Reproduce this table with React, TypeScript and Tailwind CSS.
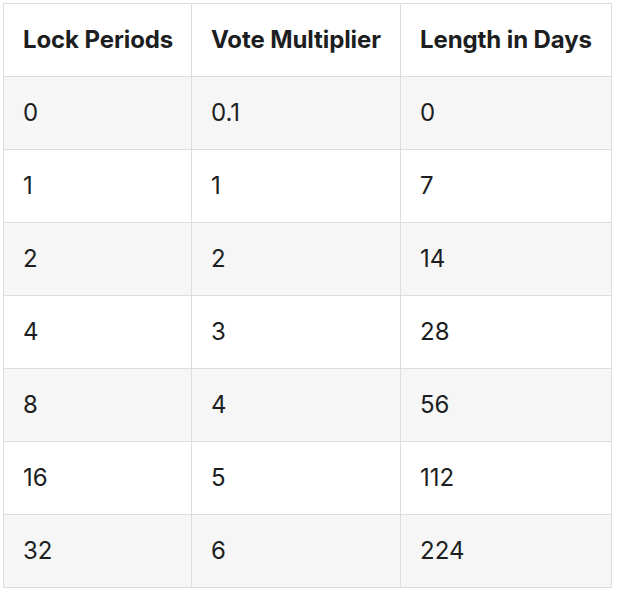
import React from "react";

const rows = [
  ["0", "0.1", "0"],
  ["1", "1", "7"],
  ["2", "2", "14"],
  ["4", "3", "28"],
  ["8", "4", "56"],
  ["16", "5", "112"],
  ["32", "6", "224"],
];

export default function App() {
  return (
    <div className="bg-white w-[618px] h-[594px] pl-[3px] pt-[3px]" style={{ fontFamily: "Inter, 'Noto Sans', sans-serif" }}>
      <table className="border-collapse table-fixed w-[608px] text-[24px] text-[#1c1e21]">
        <colgroup>
          <col className="w-[188px]" />
          <col className="w-[209px]" />
          <col className="w-[211px]" />
        </colgroup>
        <thead>
          <tr className="bg-white">
            {["Lock Periods", "Vote Multiplier", "Length in Days"].map((h) => (
              <th key={h} className="border border-[#dadde1] pl-[19px] pr-0 py-[19px] leading-[34px] text-left font-bold whitespace-nowrap tracking-[-0.1px]">
                {h}
              </th>
            ))}
          </tr>
        </thead>
        <tbody>
          {rows.map((r, i) => (
            <tr key={i} className={i % 2 === 0 ? "bg-[#f6f6f6]" : "bg-white"}>
              {r.map((c, j) => (
                <td key={j} className="border border-[#dadde1] pl-[19px] pr-0 py-[19px] leading-[34px]">
                  {c}
                </td>
              ))}
            </tr>
          ))}
        </tbody>
      </table>
    </div>
  );
}
